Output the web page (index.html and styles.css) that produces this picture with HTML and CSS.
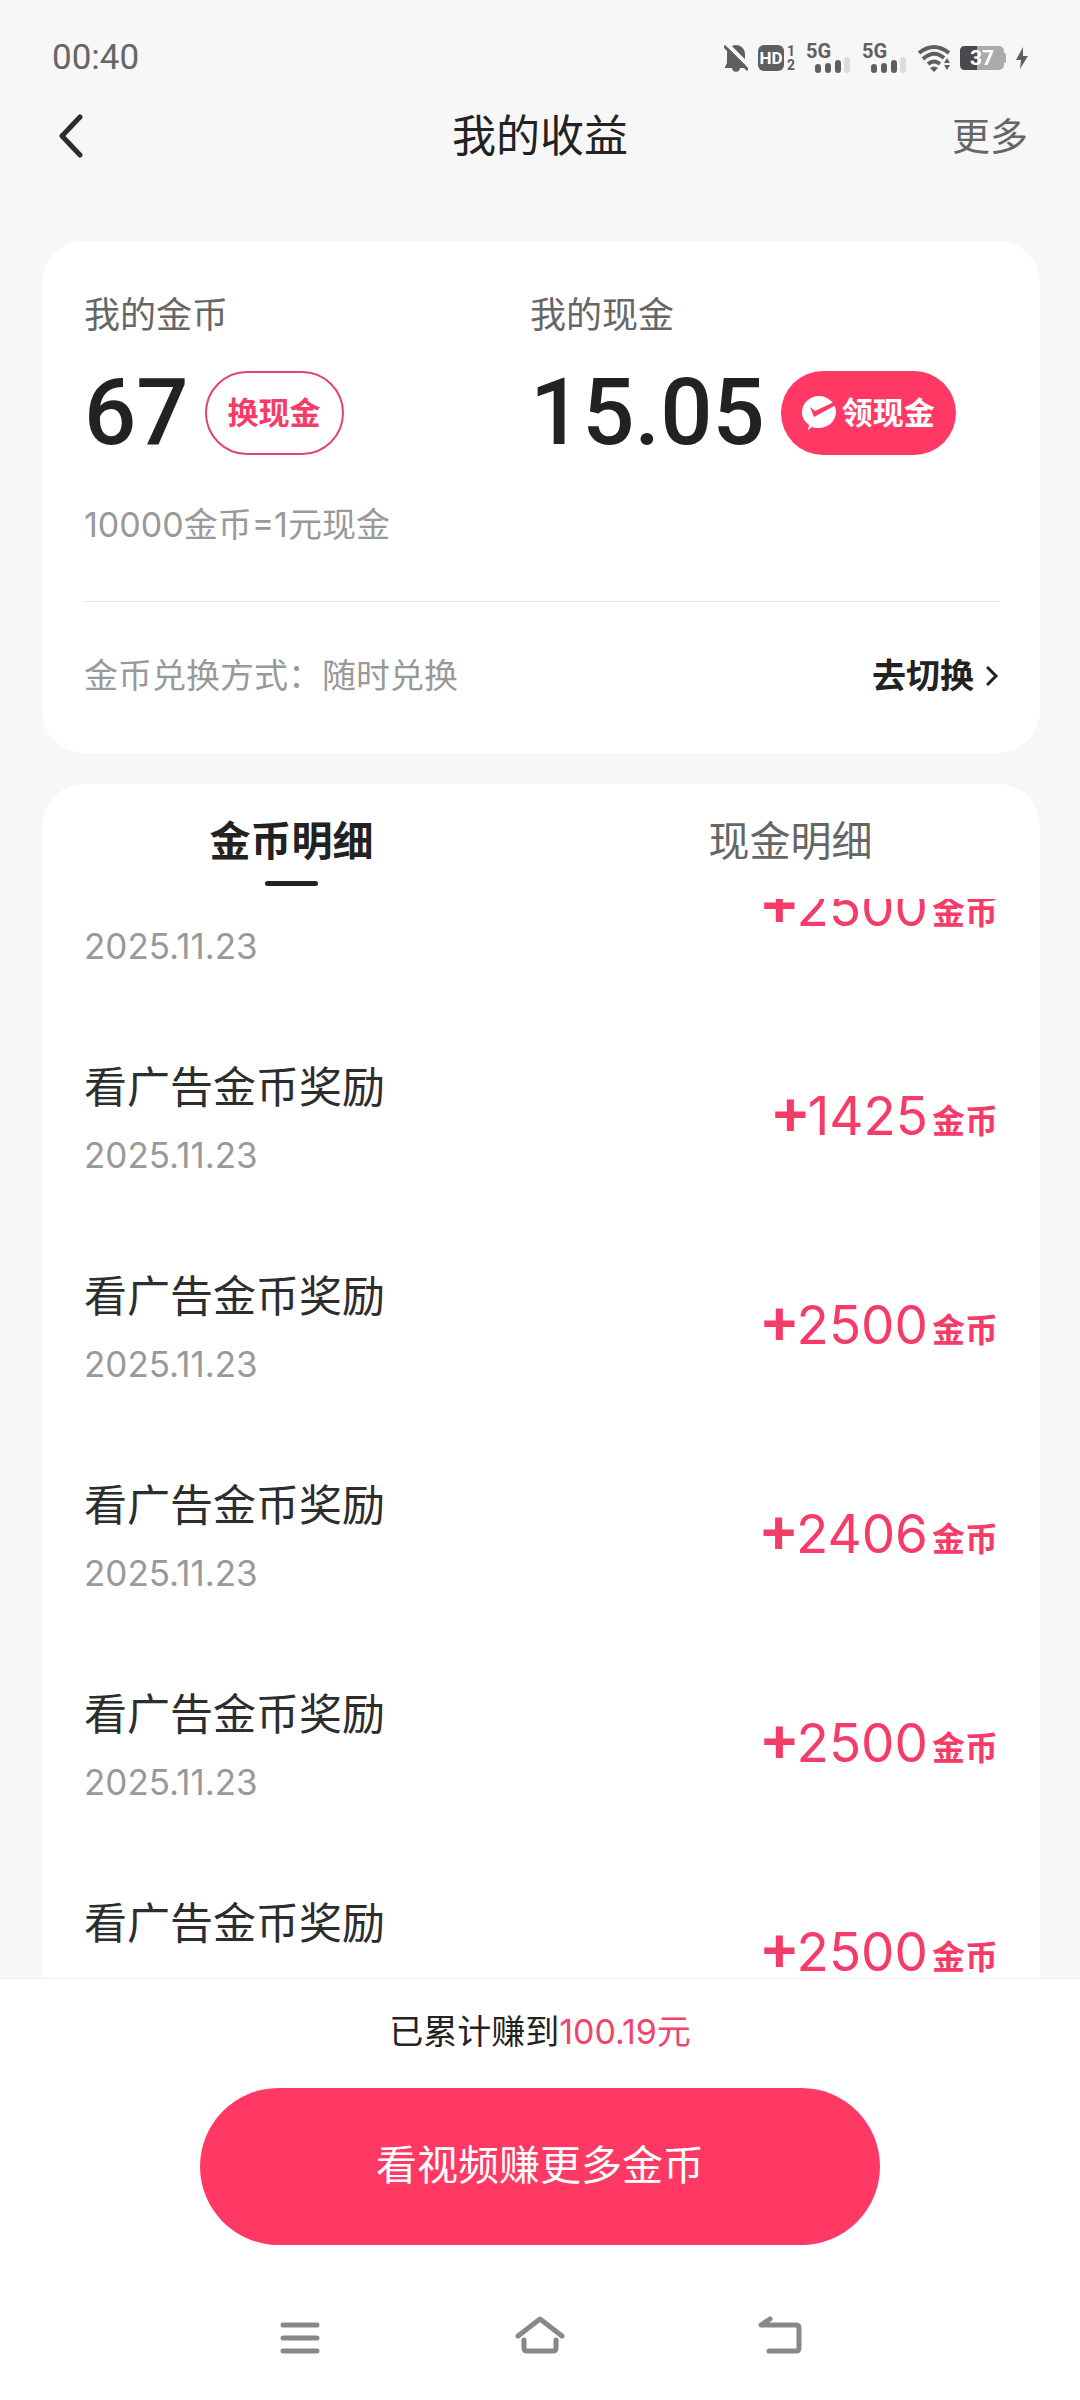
FILE: index.html
```html
<!DOCTYPE html>
<html lang="zh-CN">
<head>
<meta charset="utf-8">
<meta name="viewport" content="width=device-width, initial-scale=1">
<title>我的收益</title>
<link rel="stylesheet" href="styles.css">
</head>
<body>
<div class="status-bar">
  <time class="clock">00:40</time>
  <div class="status-icons">
    <svg width="24" height="28" viewBox="0 0 24 28" aria-hidden="true">
      <path class="ink" d="M12 1c5 0 9 4 9 9v9l2 4v1H1v-1l2-4v-9c0-5 4-9 9-9zM8 24h8c0 5-8 5-8 0z"/>
      <path d="M3 0L26 23" stroke="#f7f7f7" stroke-width="4"/>
      <path d="M0 2L24 26" stroke="#5f5f5f" stroke-width="3"/>
    </svg>
    <svg width="38" height="30" viewBox="0 0 38 30" aria-hidden="true">
      <rect class="ink" y="2" width="26" height="26" rx="6"/>
      <text class="hd" x="13" y="21" text-anchor="middle">HD</text>
      <text class="sim" x="33" y="13" text-anchor="middle">1</text>
      <text class="sim" x="33" y="27" text-anchor="middle">2</text>
    </svg>
    <svg width="46" height="40" viewBox="0 0 46 40" aria-hidden="true">
      <text class="net" x="0" y="20">5G</text>
      <path class="bars" d="M12 29v3M22 28v4M32 25v7"/>
      <path class="bars off" d="M41 22v10"/>
    </svg>
    <svg width="46" height="40" viewBox="0 0 46 40" aria-hidden="true">
      <text class="net" x="0" y="20">5G</text>
      <path class="bars" d="M12 29v3M22 28v4M32 25v7"/>
      <path class="bars off" d="M41 22v10"/>
    </svg>
    <svg width="32" height="28" viewBox="0 0 32 28" aria-hidden="true">
      <path d="M1 9Q16-3 31 9M5 15Q16 5 26 14M10 20Q16 15 22 20" fill="none" stroke="#5f5f5f" stroke-width="4"/>
      <path class="ink" d="M12 24q4-3 8 0l-4 4zM26 19l3-5 3 5zM26 21h6l-3 5z"/>
    </svg>
    <svg width="46" height="28" viewBox="0 0 46 28" aria-hidden="true">
      <rect x="0" y="2" width="44" height="24" rx="5" fill="#ababab"/>
      <path d="M44 9q3 0 3 5t-3 5z" fill="#ababab"/>
      <path d="M5 2h12v24H5q-5 0-5-5V7q0-5 5-5z" fill="#4a4a4a"/>
      <text class="level" x="22" y="21" text-anchor="middle">37</text>
    </svg>
    <svg width="12" height="28" viewBox="0 0 12 28" aria-hidden="true">
      <path class="ink" d="M7 3L0 16h5l-1 9 8-13H7z"/>
    </svg>
  </div>
</div>

<header class="nav-bar">
  <button class="back" aria-label="返回">
    <svg width="26" height="44" viewBox="0 0 26 44"><path d="M22 3L4 22l18 19" fill="none" stroke="#2d2d2d" stroke-width="5" stroke-linecap="round" stroke-linejoin="round"/></svg>
  </button>
  <h1 class="title">我的收益</h1>
  <a class="more" href="#more">更多</a>
</header>

<main class="content">
  <section class="card summary">
    <div class="balances">
      <div>
        <h2 class="label">我的金币</h2>
        <div class="balance">
          <span class="figure">67</span>
          <button class="pill outline">换现金</button>
        </div>
      </div>
      <div>
        <h2 class="label">我的现金</h2>
        <div class="balance">
          <span class="figure">15.05</span>
          <button class="pill solid">
            <svg width="34" height="36" viewBox="0 0 34 36" aria-hidden="true">
              <path d="M17 1c9 0 17 7 17 16s-8 16-17 16c-3 0-5 0-7-1l-4 3 1-5C3 27 0 23 0 17 0 8 8 1 17 1z" fill="#fff"/>
              <path d="M8 12l5 4L32 7l2 3-22 12z" fill="#ff3864"/>
            </svg>
            <span>领现金</span>
          </button>
        </div>
      </div>
    </div>
    <p class="rate">10000金币=1元现金</p>
    <div class="exchange">
      <span>金币兑换方式：随时兑换</span>
      <a class="switch" href="#switch">去切换
        <svg width="14" height="24" viewBox="0 0 14 24" aria-hidden="true"><path d="M1 3l9 9-9 9" fill="none" stroke="#222" stroke-width="3"/></svg>
      </a>
    </div>
  </section>

  <section class="card details">
    <div class="tabs" role="tablist">
      <button class="tab active" role="tab" aria-selected="true">金币明细</button>
      <button class="tab" role="tab" aria-selected="false">现金明细</button>
    </div>
    <div class="viewport">
      <ul class="records">
        <li class="record">
          <div class="info"><time class="date">2025.11.23</time></div>
          <p class="amount"><b>+</b>2500<span class="unit">金币</span></p>
        </li>
        <li class="record">
          <div class="info"><p class="name">看广告金币奖励</p><time class="date">2025.11.23</time></div>
          <p class="amount"><b>+</b>1425<span class="unit">金币</span></p>
        </li>
        <li class="record">
          <div class="info"><p class="name">看广告金币奖励</p><time class="date">2025.11.23</time></div>
          <p class="amount"><b>+</b>2500<span class="unit">金币</span></p>
        </li>
        <li class="record">
          <div class="info"><p class="name">看广告金币奖励</p><time class="date">2025.11.23</time></div>
          <p class="amount"><b>+</b>2406<span class="unit">金币</span></p>
        </li>
        <li class="record">
          <div class="info"><p class="name">看广告金币奖励</p><time class="date">2025.11.23</time></div>
          <p class="amount"><b>+</b>2500<span class="unit">金币</span></p>
        </li>
        <li class="record">
          <div class="info"><p class="name">看广告金币奖励</p><time class="date">2025.11.23</time></div>
          <p class="amount"><b>+</b>2500<span class="unit">金币</span></p>
        </li>
      </ul>
    </div>
  </section>
</main>

<footer class="bottom">
  <p class="total">已累计赚到<span class="earned">100.19元</span></p>
  <button class="watch">看视频赚更多金币</button>
  <nav class="system-nav">
    <button aria-label="最近任务">
      <svg width="50" height="44" viewBox="0 0 50 44"><path d="M8 9h34M8 22h34M8 35h34"/></svg>
    </button>
    <button aria-label="主屏幕">
      <svg width="50" height="44" viewBox="0 0 50 44"><path d="M3 20L25 3l22 17M9 24v8q0 3 3 3h26q3 0 3-3v-8"/></svg>
    </button>
    <button aria-label="返回上一页">
      <svg width="50" height="44" viewBox="0 0 50 44"><path d="M15 3L6 9h35q3 0 3 3v20q0 3-3 3H14"/></svg>
    </button>
  </nav>
</footer>
</body>
</html>
```
FILE: styles.css
```css
* {
  box-sizing: border-box;
  margin: 0;
  padding: 0;
}

body {
  display: flex;
  flex-direction: column;
  height: 100vh;
  background: #f7f7f7;
  color: #222;
  font-family: Inter, "Noto Sans CJK SC", sans-serif;
  font-size: 34px;
  line-height: 48px;
}

button {
  border: 0;
  background: none;
  color: inherit;
  font: inherit;
  cursor: pointer;
}

a {
  color: inherit;
  text-decoration: none;
}

h1, h2 {
  font-weight: 400;
}

svg {
  display: block;
  flex: none;
}

/* Status bar */
.status-bar {
  display: flex;
  align-items: center;
  justify-content: space-between;
  height: 100px;
  padding: 16px 52px 0;
}

.clock {
  color: #666;
  font-family: Roboto, sans-serif;
  font-size: 35px;
}

.status-icons {
  display: flex;
  align-items: center;
  gap: 10px;
}

.status-icons text {
  fill: #5f5f5f;
  font-family: Roboto, sans-serif;
  font-weight: 700;
}

.ink { fill: #5f5f5f; }
.status-icons .hd { fill: #fff; font-size: 17px; }
.sim { font-size: 14px; }
.net { font-size: 20px; }
.status-icons .level { fill: #fff; font-size: 21px; }

.bars {
  stroke: #5f5f5f;
  stroke-width: 6;
  stroke-linecap: round;
}

.bars.off { stroke: #dcdcdc; }

/* Navigation bar */
.nav-bar {
  display: grid;
  grid-template-columns: 1fr auto 1fr;
  align-items: center;
  height: 72px;
  padding: 0 52px;
}

.title {
  font-size: 44px;
}

.more {
  justify-self: end;
  color: #666;
  font-size: 38px;
}

.back {
  justify-self: start;
  padding-left: 6px;
}

/* Cards */
.content {
  display: flex;
  flex: 1;
  flex-direction: column;
  gap: 31px;
  min-height: 0;
  padding: 69px 40px 0 42px;
}

.card {
  border-radius: 42px;
  background: #fff;
}

.summary {
  padding: 50px 40px 53px 42px;
}

.balances {
  display: grid;
  grid-template-columns: 446fr 470fr;
}

.label {
  color: #666;
  font-size: 36px;
}

.balance {
  display: flex;
  align-items: center;
  gap: 16px;
  margin-top: 32px;
}

.figure {
  font-family: Roboto, sans-serif;
  font-size: 92px;
  font-weight: 500;
  line-height: 84px;
}

.pill {
  display: flex;
  align-items: center;
  gap: 6px;
  height: 84px;
  padding: 0 21px;
  border-radius: 42px;
  font-size: 31px;
  font-weight: 700;
}

.outline {
  border: 2px solid #e2446c;
  color: #f53b68;
}

.solid {
  background: #ff3864;
  color: #fff;
}

.rate {
  margin-top: 46px;
  color: #999;
}

.exchange {
  display: flex;
  align-items: center;
  justify-content: space-between;
  margin-top: 52px;
  padding-top: 50px;
  border-top: 1px solid #e6e6e6;
  color: #999;
}

.switch {
  display: flex;
  align-items: center;
  gap: 12px;
  color: #222;
  font-weight: 700;
}

/* Detail list */
.details {
  display: flex;
  flex: 1;
  flex-direction: column;
  min-height: 0;
  border-radius: 42px 42px 0 0;
}

.tabs {
  display: grid;
  grid-template-columns: 1fr 1fr;
  height: 115px;
}

.tab {
  display: flex;
  flex-direction: column;
  align-items: center;
  gap: 16px;
  padding-top: 33px;
  color: #666;
  font-size: 41px;
}

.tab.active {
  color: #222;
  font-weight: 700;
}

.tab.active::after {
  width: 53px;
  height: 5px;
  border-radius: 3px;
  background: #222;
  content: "";
}

.viewport {
  flex: 1;
  min-height: 0;
  overflow: hidden;
}

/* The list rests scrolled part of the way into its first record. */
.records {
  margin-top: -92px;
  list-style: none;
}

.record {
  display: flex;
  align-items: center;
  justify-content: space-between;
  height: 209px;
  padding: 0 42px;
}

.info {
  display: flex;
  flex-direction: column;
  justify-content: flex-end;
  gap: 20px;
  height: 116px;
}

.name {
  color: #2d2d2d;
  font-size: 43px;
}

.date {
  color: #999;
  font-size: 35px;
}

.amount {
  padding-bottom: 12px;
  color: #f53b68;
  font-size: 53px;
}

.amount b {
  font-family: Roboto, sans-serif;
  font-size: 62px;
  font-weight: 500;
  line-height: 48px;
}

.unit {
  margin-left: 4px;
  font-size: 33px;
  font-weight: 700;
  line-height: 1;
  vertical-align: 2px;
}

/* Bottom panel */
.bottom {
  display: flex;
  flex-direction: column;
  align-items: center;
  padding: 29px 40px 40px;
  border-top: 1px solid #f0f0f0;
  background: #fff;
}

.earned {
  color: #f0436d;
}

.watch {
  width: 68%;
  height: 157px;
  margin-top: 32px;
  padding-bottom: 4px;
  border-radius: 79px;
  background: #ff3864;
  color: #fff;
  font-size: 41px;
}

.system-nav {
  display: grid;
  grid-template-columns: repeat(3, 1fr);
  justify-items: center;
  width: 72%;
  margin-top: 71px;
}

.system-nav path {
  fill: none;
  stroke: #888;
  stroke-width: 5;
  stroke-linecap: round;
  stroke-linejoin: round;
}
```
